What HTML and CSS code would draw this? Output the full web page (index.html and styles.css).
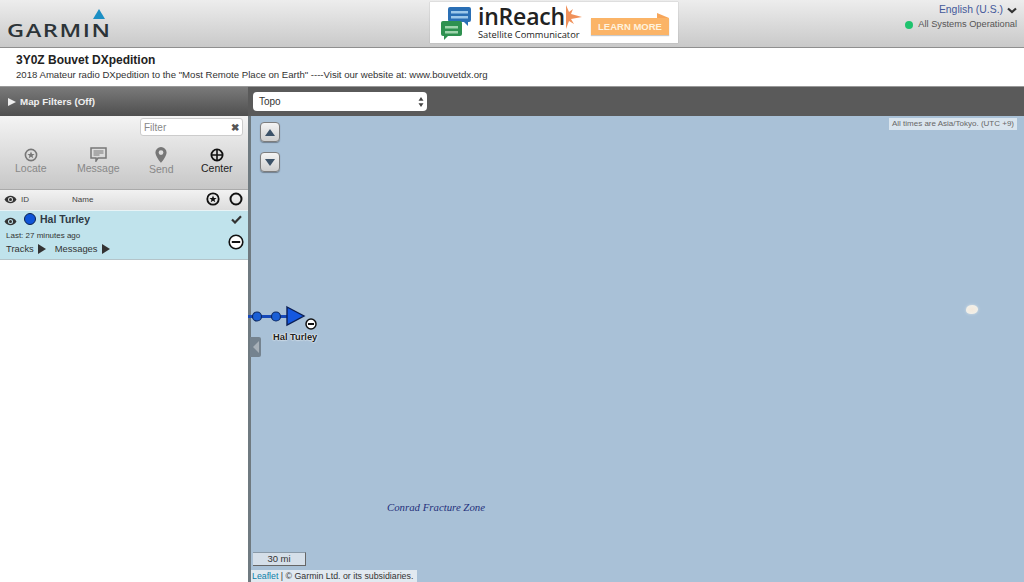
FILE: index.html
```html
<!DOCTYPE html>
<html>
<head>
    <meta charset="UTF-8">
    <link rel="stylesheet" href="styles.css">
</head>
<body>
    <div class="page">
        <header class="top-bar">
            <div class="logo">
                <svg class="logo-mark" width="12" height="10" viewBox="0 0 12 10"><polygon points="6,0 12,10 0,10" fill="#1c8fc4"/></svg>
                <span class="logo-text">GARMIN</span>
            </div>
            <div class="ad">
                <svg class="ad-icon" width="32" height="34" viewBox="0 0 32 34">
                    <path d="M10 1h19a2 2 0 0 1 2 2v11a2 2 0 0 1-2 2h-1v4l-4-4H10a2 2 0 0 1-2-2V3a2 2 0 0 1 2-2z" fill="#2a6fb5"/>
                    <rect x="11" y="5" width="17" height="2.5" fill="#9cc8ea"/>
                    <rect x="11" y="10" width="17" height="2.5" fill="#9cc8ea"/>
                    <path d="M3 15h17a2 2 0 0 1 2 2v11a2 2 0 0 1-2 2H8l-4 4v-4H3a2 2 0 0 1-2-2V17a2 2 0 0 1 2-2z" fill="#2e9150"/>
                    <rect x="5" y="20" width="13" height="2.5" fill="#9ed4ac"/>
                    <rect x="5" y="25" width="13" height="2.5" fill="#9ed4ac"/>
                </svg>
                <div class="ad-copy">
                    <div class="ad-title">inReach</div>
                    <div class="ad-sub">Satellite Communicator</div>
                </div>
                <svg class="ad-spark" width="16" height="24" viewBox="0 0 16 24"><path d="M0 0l3 7 4-3-2 5 11 3-11 2 3 5-5-3-3 8z" fill="#f0915a"/></svg>
                <div class="ad-btn">LEARN MORE</div>
            </div>
            <div class="top-right">
                <div class="lang">English (U.S.) <svg width="10" height="7" viewBox="0 0 10 7"><path d="M1 1.500l4 3.500 4-3.500" fill="none" stroke="#333" stroke-width="2.200"/></svg></div>
                <div class="status"><span class="status-dot"></span>All Systems Operational</div>
            </div>
        </header>

        <section class="title-bar">
            <h1>3Y0Z Bouvet DXpedition</h1>
            <p>2018 Amateur radio DXpedition to the "Most Remote Place on Earth" ----Visit our website at: www.bouvetdx.org</p>
        </section>

        <div class="main">
            <aside class="sidebar">
                <div class="filters-head"><span class="tri-right"></span>Map Filters (Off)</div>
                <div class="tools">
                    <div class="filter-row">
                        <div class="filter-box"><span>Filter</span><b>✖</b></div>
                    </div>
                    <div class="actions">
                        <div class="action action-locate">
                            <svg width="14" height="14" viewBox="0 0 14 14"><circle cx="7" cy="7" r="5.600" fill="none" stroke="#777" stroke-width="1.600"/><polygon points="7,3.400 8,6 10.600,6 8.500,7.700 9.300,10.300 7,8.800 4.700,10.300 5.500,7.700 3.400,6 6,6" fill="#777"/></svg>
                            <span>Locate</span>
                        </div>
                        <div class="action action-message">
                            <svg width="17" height="15" viewBox="0 0 17 15"><path d="M1 1h15v10H8l-2 3v-3H1z" fill="none" stroke="#777" stroke-width="1.500"/><path d="M3.500 4h10M3.500 6h10M3.500 8h6" stroke="#777" stroke-width="1"/></svg>
                            <span>Message</span>
                        </div>
                        <div class="action action-send">
                            <svg width="12" height="16" viewBox="0 0 12 16"><path d="M6 0a5.600 5.600 0 0 0-5.600 5.600C.4 9.500 6 16 6 16s5.600-6.500 5.600-10.400A5.600 5.600 0 0 0 6 0zm0 8a2.400 2.400 0 1 1 0-4.800A2.400 2.400 0 0 1 6 8z" fill="#777"/></svg>
                            <span>Send</span>
                        </div>
                        <div class="action action-center">
                            <svg width="14" height="14" viewBox="0 0 14 14"><circle cx="7" cy="7" r="5.600" fill="none" stroke="#111" stroke-width="1.800"/><path d="M7 1v12M1 7h12" stroke="#111" stroke-width="1.600"/></svg>
                            <span>Center</span>
                        </div>
                    </div>
                </div>
                <div class="list-head">
                    <svg class="eye" width="13" height="9" viewBox="0 0 13 9"><path d="M.5 4.500C2 2 4 .8 6.500.8S11 2 12.500 4.500C11 7 9 8.200 6.500 8.200S2 7 .5 4.500z" fill="#333"/><circle cx="6.500" cy="4.500" r="2.500" fill="#ddd"/><circle cx="6.500" cy="4.500" r="1.500" fill="#333"/></svg>
                    <span class="col-id">ID</span>
                    <span class="col-name">Name</span>
                    <svg class="col-star" width="14" height="14" viewBox="0 0 14 14"><circle cx="7" cy="7" r="5.700" fill="none" stroke="#111" stroke-width="1.800"/><polygon points="7,3.400 8,6 10.600,6 8.500,7.700 9.300,10.300 7,8.800 4.700,10.300 5.500,7.700 3.400,6 6,6" fill="#111"/></svg>
                    <svg class="col-ring" width="14" height="14" viewBox="0 0 14 14"><circle cx="7" cy="7" r="5.500" fill="none" stroke="#111" stroke-width="2"/></svg>
                </div>
                <div class="device">
                    <div class="device-main">
                        <div class="device-name">
                            <svg class="eye eye-row" width="13" height="9" viewBox="0 0 13 9"><path d="M.5 4.500C2 2 4 .8 6.500.8S11 2 12.500 4.500C11 7 9 8.200 6.500 8.200S2 7 .5 4.500z" fill="#333"/><circle cx="6.500" cy="4.500" r="2.500" fill="#c0e3ec"/><circle cx="6.500" cy="4.500" r="1.500" fill="#333"/></svg>
                            <span class="device-dot"></span>
                            <b>Hal Turley</b>
                        </div>
                        <div class="device-last">Last: 27 minutes ago</div>
                        <div class="device-links">
                            <span>Tracks</span><i class="tri-link"></i>
                            <span class="link-gap">Messages</span><i class="tri-link"></i>
                        </div>
                    </div>
                    <div class="device-side">
                        <svg width="11" height="9" viewBox="0 0 11 9"><path d="M1 4.500l3 3L10 1.200" fill="none" stroke="#333" stroke-width="2.200"/></svg>
                        <svg width="16" height="16" viewBox="0 0 16 16"><circle cx="8" cy="8" r="6.800" fill="#fff" stroke="#111" stroke-width="1.600"/><rect x="3.800" y="7" width="8.400" height="2" fill="#111"/></svg>
                    </div>
                </div>
            </aside>

            <div class="content">
                <div class="map-bar">
                    <div class="map-select">
                        <span>Topo</span>
                        <svg width="6" height="10" viewBox="0 0 6 10"><path d="M3 0l2.500 3.800h-5zM3 10L.5 6.200h5z" fill="#444"/></svg>
                    </div>
                </div>
                <div class="map">
                    <div class="map-controls">
                        <div class="ctl-btn"><i class="ctl-up"></i></div>
                        <div class="ctl-btn"><i class="ctl-down"></i></div>
                    </div>
                    <div class="tz-note">All times are Asia/Tokyo. (UTC +9)</div>

                    <svg class="track" width="66" height="24" viewBox="0 0 66 24">
                        <path d="M0 12.500h40" stroke="#1548b8" stroke-width="3"/>
                        <circle cx="9" cy="12.500" r="4.500" fill="#1a5fd6" stroke="#0c2a66" stroke-width="1.200"/>
                        <circle cx="28" cy="12.500" r="4.500" fill="#1a5fd6" stroke="#0c2a66" stroke-width="1.200"/>
                        <polygon points="39,3 56,12 39,21" fill="#1558e0" stroke="#0b1f55" stroke-width="1.400"/>
                    </svg>
                    <svg class="track-state" width="12" height="12" viewBox="0 0 12 12"><circle cx="6" cy="6" r="5" fill="#fff" stroke="#111" stroke-width="1.500"/><rect x="3" y="5" width="6" height="2" fill="#111"/></svg>
                    <div class="track-label">Hal Turley</div>
                    <div class="collapse-tab"><i></i></div>

                    <div class="island"></div>
                    <div class="zone-label">Conrad Fracture Zone</div>

                    <div class="scale">30 mi</div>
                    <div class="attribution"><a>Leaflet</a> | © Garmin Ltd. or its subsidiaries.</div>
                </div>
            </div>
        </div>
    </div>
</body>
</html>
```

FILE: styles.css
```css
* {
    box-sizing: border-box;
}

html, body {
    height: 100%;
}

body {
    margin: 0;
    overflow: hidden;
    font-family: "Liberation Sans", Arial, sans-serif;
    color: #333;
    background: #fff;
}

.page {
    display: flex;
    flex-direction: column;
    height: 582px;
}

/* top bar */
.top-bar {
    position: relative;
    display: flex;
    justify-content: space-between;
    height: 48px;
    flex-shrink: 0;
    background: linear-gradient(#ededed, #c9c9c9);
    border-bottom: 1px solid #8f8f8f;
}

.logo {
    position: relative;
    width: 110px;
    margin-left: 7px;
    padding-top: 21px;
}

.logo-mark {
    position: absolute;
    top: 9px;
    left: 86px;
}

.logo-text {
    display: block;
    font-family: "Open Sans", sans-serif;
    font-size: 18px;
    font-weight: 600;
    line-height: 19px;
    letter-spacing: 1.200px;
    color: #2c3438;
    transform: scaleX(1.310);
    transform-origin: left;
}

.ad {
    position: absolute;
    top: 2px;
    left: 430px;
    display: flex;
    align-items: center;
    width: 248px;
    height: 41px;
    padding: 0 9px 0 10px;
    background: #fff;
    box-shadow: 0 0 1px #999;
}

.ad-icon {
    flex-shrink: 0;
}

.ad-copy {
    margin-left: 6px;
    font-family: "Open Sans", sans-serif;
    color: #222;
}

.ad-title {
    font-size: 23px;
    font-weight: 600;
    line-height: 22px;
    letter-spacing: -0.200px;
}

.ad-sub {
    margin-top: 2px;
    font-size: 9.300px;
    line-height: 11px;
    white-space: nowrap;
}

.ad-spark {
    position: absolute;
    top: 3px;
    left: 136px;
}

.ad-btn {
    position: relative;
    width: 78px;
    height: 17px;
    margin: 8px 0 0 auto;
    flex-shrink: 0;
    background: #fbb467;
    color: #fff2dd;
    font-size: 9.500px;
    font-weight: bold;
    line-height: 18px;
    text-align: center;
    box-shadow: 0 1px 1px #c9c9c9;
}

.ad-btn::before {
    content: "";
    position: absolute;
    top: -5px;
    right: 0;
    width: 12px;
    height: 5px;
    background: #f7a65a;
    clip-path: polygon(0 0, 100% 100%, 0 100%);
}

.top-right {
    display: flex;
    flex-direction: column;
    align-items: flex-end;
    padding: 3px 7px 0 0;
}

.lang {
    display: flex;
    align-items: center;
    gap: 4px;
    color: #44599a;
    font-size: 10.400px;
    line-height: 14px;
}

.status {
    display: flex;
    align-items: center;
    color: #555;
    font-size: 9.250px;
    line-height: 15px;
}

.status-dot {
    width: 8px;
    height: 8px;
    margin-right: 5px;
    border-radius: 50%;
    background: #1fc36e;
}

/* title */
.title-bar {
    height: 38px;
    flex-shrink: 0;
    padding: 5px 16px 0;
    background: #fff;
}

.title-bar h1 {
    margin: 0;
    font-size: 12px;
    line-height: 15px;
    font-weight: bold;
    color: #222;
}

.title-bar p {
    margin: 0;
    font-size: 9.600px;
    line-height: 14px;
    color: #333;
}

.main {
    display: flex;
    flex: 1;
    min-height: 0;
}

/* sidebar */
.sidebar {
    width: 248px;
    flex-shrink: 0;
    display: flex;
    flex-direction: column;
    background: #fff;
}

.filters-head {
    display: flex;
    align-items: center;
    height: 30px;
    padding-left: 8px;
    border-top: 1px solid #999;
    background: linear-gradient(#7a7a7a, #4f4f4f);
    color: #efefef;
    font-size: 9.800px;
    font-weight: bold;
}

.tri-right {
    width: 0;
    height: 0;
    margin-right: 4px;
    border-left: 8px solid #eee;
    border-top: 4px solid transparent;
    border-bottom: 4px solid transparent;
}

.tools {
    height: 74px;
    background: linear-gradient(#f4f4f4, #c7c7c7);
    border-bottom: 1px solid #aaa;
}

.filter-row {
    display: flex;
    justify-content: flex-end;
    padding: 2px 5px 0 0;
}

.filter-box {
    display: flex;
    align-items: center;
    justify-content: space-between;
    width: 103px;
    height: 18px;
    padding: 0 3px;
    background: #fff;
    border: 1px solid #ccc;
    border-radius: 3px;
    color: #888;
    font-size: 10px;
}

.filter-box b {
    color: #555;
    font-size: 10px;
}

.actions {
    position: relative;
    height: 50px;
}

.action {
    position: absolute;
    top: 12px;
    display: flex;
    flex-direction: column;
    align-items: center;
    color: #888;
    font-size: 10.500px;
    line-height: 13px;
}

.action-locate {
    left: 15px;
}

.action-message {
    left: 77px;
    top: 11px;
}

.action-send {
    left: 149px;
    top: 11px;
}

.action-center {
    left: 201px;
    color: #222;
}

.list-head {
    position: relative;
    display: flex;
    align-items: center;
    height: 20px;
    padding: 0 0 1px 4px;
    background: linear-gradient(#f2f2f2, #dcdcdc);
    color: #444;
    font-size: 8px;
}

.col-id {
    margin-left: 4px;
}

.col-name {
    position: absolute;
    left: 72px;
}

.col-star {
    position: absolute;
    left: 206px;
    top: 2px;
}

.col-ring {
    position: absolute;
    left: 229px;
    top: 2px;
}

.device {
    display: flex;
    justify-content: space-between;
    height: 50px;
    background: #c0e3ec;
    border-top: 1px solid #e8f3f6;
    border-bottom: 1px solid #b4c4c9;
}

.device-main {
    padding: 0 0 0 4px;
}

.device-name {
    display: flex;
    align-items: center;
    height: 16px;
    font-size: 10.500px;
    color: #2f3a44;
}

.eye-row {
    margin-top: 5px;
}

.device-dot {
    width: 12px;
    height: 12px;
    margin-left: 7px;
    margin-right: 4px;
    border-radius: 50%;
    background: #0f55d8;
    border: 1.500px solid #0c2350;
}

.device-last {
    margin-top: 4px;
    padding-left: 2px;
    font-size: 8px;
    line-height: 10px;
}

.device-links {
    display: flex;
    align-items: center;
    margin-top: 1px;
    padding-left: 2px;
    font-size: 9.400px;
    line-height: 13px;
}

.tri-link {
    width: 0;
    height: 0;
    margin-left: 4px;
    border-left: 8px solid #333;
    border-top: 5px solid transparent;
    border-bottom: 5px solid transparent;
}

.link-gap {
    margin-left: 9px;
}

.device-side {
    display: flex;
    flex-direction: column;
    align-items: center;
    width: 24px;
    padding-top: 4px;
    gap: 10px;
}

/* map side */
.content {
    flex: 1;
    display: flex;
    flex-direction: column;
    min-width: 0;
    border-left: 3px solid #6f7a80;
}

.map-bar {
    height: 30px;
    margin-left: -3px;
    padding: 5px 0 0 5px;
    flex-shrink: 0;
    background: #5a5a5a;
    border-top: 1px solid #999;
}

.map-select {
    display: flex;
    align-items: center;
    justify-content: space-between;
    width: 174px;
    height: 19px;
    padding: 0 3px 0 6px;
    background: #fff;
    border-radius: 4px;
    font-size: 10px;
    color: #333;
}

.map {
    position: relative;
    flex: 1;
    background: #a9c1d7;
}

.map-controls {
    position: absolute;
    top: 6px;
    left: 9px;
    display: flex;
    flex-direction: column;
    gap: 10px;
}

.ctl-btn {
    display: flex;
    align-items: center;
    justify-content: center;
    width: 20px;
    height: 20px;
    border-radius: 4px;
    border: 1px solid #7d7d7d;
    background: linear-gradient(#f4f4f4, #cfcfcf);
    box-shadow: 0 1px 1px #6f7f8f;
}

.ctl-up {
    border-left: 5px solid transparent;
    border-right: 5px solid transparent;
    border-bottom: 7px solid #3c5268;
}

.ctl-down {
    border-left: 5px solid transparent;
    border-right: 5px solid transparent;
    border-top: 7px solid #3c5268;
}

.tz-note {
    position: absolute;
    top: 2px;
    right: 7px;
    height: 12px;
    padding: 0 3px;
    background: rgba(235, 240, 245, 0.75);
    color: #666;
    font-size: 8px;
    line-height: 12px;
}

.track {
    position: absolute;
    top: 188px;
    left: -3px;
}

.track-state {
    position: absolute;
    top: 202px;
    left: 54px;
}

.track-label {
    position: absolute;
    top: 215px;
    left: 22px;
    color: #222;
    font-size: 9.300px;
    line-height: 12px;
    font-weight: bold;
    text-shadow: 0 0 2px #fff, 0 0 2px #fff;
}

.collapse-tab {
    position: absolute;
    top: 221px;
    left: -1px;
    display: flex;
    align-items: center;
    justify-content: center;
    width: 11px;
    height: 20px;
    background: #75838f;
    border-radius: 0 2px 2px 0;
}

.collapse-tab i {
    border-top: 6px solid transparent;
    border-bottom: 6px solid transparent;
    border-right: 6px solid #a7b0b8;
}

.island {
    position: absolute;
    top: 189px;
    left: 715px;
    width: 12px;
    height: 9px;
    border-radius: 50% 45% 50% 40%;
    background: radial-gradient(#f3e9dc, #f0f2ee);
    box-shadow: 0 0 3px #d5e1e8;
}

.zone-label {
    position: absolute;
    top: 385px;
    left: 136px;
    color: #1f2f7a;
    font-family: "Liberation Serif", serif;
    font-size: 10.800px;
    font-style: italic;
    line-height: 13px;
    white-space: nowrap;
}

.scale {
    position: absolute;
    bottom: 16px;
    left: 2px;
    width: 53px;
    height: 14px;
    background: #d5dfe9;
    border-right: 1px solid #666;
    border-bottom: 1px solid #666;
    border-top: 1px solid #8a9aa8;
    color: #333;
    font-size: 9.500px;
    line-height: 12px;
    text-align: center;
}

.attribution {
    position: absolute;
    bottom: 0;
    left: 0;
    height: 12px;
    padding: 0 4px 0 1px;
    background: rgba(235, 240, 245, 0.85);
    color: #333;
    font-size: 8.800px;
    line-height: 12px;
    white-space: nowrap;
}

.attribution a {
    color: #0d7ea8;
}
```
